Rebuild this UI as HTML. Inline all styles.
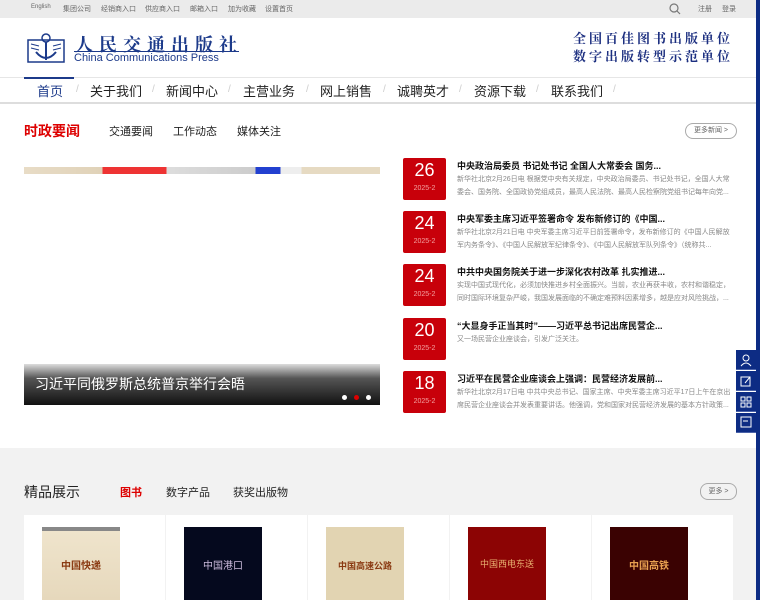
<!DOCTYPE html>
<html><head><meta charset="utf-8">
<style>
*{margin:0;padding:0;box-sizing:border-box}
html,body{width:760px;height:600px;overflow:hidden}
body{background:#fff;font-family:"Liberation Sans","Noto Sans CJK SC",sans-serif;position:relative;color:#222}
.top{position:absolute;left:0;top:0;width:756px;height:18px;background:#ebebeb;font-size:7px;color:#666}
.top span{position:absolute;top:4px}
.right{position:absolute;right:0;top:0;width:4px;height:600px;background:#0d2c84}
.nav{position:absolute;top:77px;left:0;width:756px;height:27px;border-top:1px solid #e6e6e6;border-bottom:2px solid #ddd}
.nav span{position:absolute;top:3px;font-size:13px;color:#222}
.nav i{position:absolute;top:6px;font-style:normal;color:#ccc;font-size:10px}
.date{position:absolute;left:403px;width:43px;height:42px;background:#c8000a;border-radius:2px;color:#fff;text-align:center}
.date b{display:block;font-size:18px;font-weight:normal;line-height:18px;margin-top:3px}
.date s{display:block;text-decoration:none;font-size:7px;color:#f3a0a0;margin-top:6px}
.nt{position:absolute;left:457px;font-size:9px;font-weight:bold;color:#111}
.nd{position:absolute;left:457px;width:278px;font-size:7px;color:#888;line-height:13px}
.card{position:absolute;top:515px;width:141px;height:85px;background:#fff}
.book{position:absolute;top:527px;width:78px;height:73px}
.side{position:absolute;left:736px;width:20px;height:20px;background:#0d2c84;border-bottom:1px solid #4a62a8}
</style></head><body>
<div class="top">
<span style="left:31px;font-size:6px">English</span><span style="left:63px">集团公司</span><span style="left:101px">经销商入口</span><span style="left:145px">供应商入口</span><span style="left:190px">邮箱入口</span><span style="left:228px">加为收藏</span><span style="left:265px">设置首页</span>
<svg style="position:absolute;left:669px;top:3px" width="12" height="12"><circle cx="5" cy="5" r="4" fill="none" stroke="#777" stroke-width="1.2"/><line x1="8" y1="8" x2="11" y2="11" stroke="#777" stroke-width="1.2"/></svg>
<span style="left:698px">注册</span><span style="left:722px">登录</span>
</div>
<div class="right"></div>
<svg style="position:absolute;left:27px;top:32px" width="38" height="32"><rect x="1" y="8" width="36" height="22" fill="none" stroke="#1c3a8a" stroke-width="1.5"/><circle cx="19" cy="6" r="4" fill="none" stroke="#1c3a8a" stroke-width="1.5"/><line x1="19" y1="10" x2="19" y2="28" stroke="#1c3a8a" stroke-width="2"/><path d="M9 20 Q19 32 29 20" fill="none" stroke="#1c3a8a" stroke-width="2"/><path d="M4 12 L12 14 M4 16 L12 18 M34 12 L26 14 M34 16 L26 18" stroke="#1c3a8a"/></svg>
<div style="position:absolute;left:75px;top:31px;font-size:18px;font-weight:bold;color:#1c3a8a;letter-spacing:6px;font-family:'Noto Serif CJK SC',serif">人民交通出版社</div>
<div style="position:absolute;left:74px;top:51px;width:165px;border-top:1px solid #1c3a8a"></div>
<div style="position:absolute;left:74px;top:52px;font-size:11px;color:#1c3a8a">China Communications Press</div>
<div style="position:absolute;left:573px;top:29px;font-size:13px;font-weight:bold;color:#1c2f80;letter-spacing:3px;line-height:18px;font-family:'Noto Serif CJK SC',serif">全国百佳图书出版单位<br>数字出版转型示范单位</div>
<div class="nav">
<div style="position:absolute;left:24px;top:-1px;width:50px;height:2px;background:#1c3a8a"></div>
<span style="left:37px;color:#1c3a8a">首页</span><i style="left:76px">/</i>
<span style="left:90px">关于我们</span><i style="left:152px">/</i>
<span style="left:166px">新闻中心</span><i style="left:228px">/</i>
<span style="left:243px">主营业务</span><i style="left:306px">/</i>
<span style="left:320px">网上销售</span><i style="left:383px">/</i>
<span style="left:397px">诚聘英才</span><i style="left:459px">/</i>
<span style="left:474px">资源下载</span><i style="left:536px">/</i>
<span style="left:551px">联系我们</span><i style="left:613px">/</i>
</div>
<div style="position:absolute;left:24px;top:121px;font-size:14px;font-weight:bold;color:#d00">时政要闻</div>
<div style="position:absolute;left:109px;top:123px;font-size:11px">交通要闻</div>
<div style="position:absolute;left:173px;top:123px;font-size:11px">工作动态</div>
<div style="position:absolute;left:237px;top:123px;font-size:11px">媒体关注</div>
<div style="position:absolute;left:685px;top:123px;width:52px;height:16px;border:1px solid #aaa;border-radius:8px;font-size:7px;color:#666;text-align:center;line-height:14px">更多新闻 &gt;</div>
<div style="position:absolute;left:24px;top:167px;width:356px;height:7px;background:linear-gradient(90deg,#e8dcc6 0,#e0d2b8 22%,#e33 22%,#e33 40%,#ddd 40%,#ccc 65%,#2240d0 65%,#2240d0 72%,#eee 72%,#eee 78%,#e6dac2 78%)"></div>
<div style="position:absolute;left:24px;top:364px;width:356px;height:41px;background:linear-gradient(#ddd,#555 35%,#111)"></div>
<div style="position:absolute;left:35px;top:374px;font-size:14px;color:#fff">习近平同俄罗斯总统普京举行会晤</div>
<div style="position:absolute;left:342px;top:395px;width:5px;height:5px;border-radius:50%;background:#fff"></div>
<div style="position:absolute;left:354px;top:395px;width:5px;height:5px;border-radius:50%;background:#d00"></div>
<div style="position:absolute;left:366px;top:395px;width:5px;height:5px;border-radius:50%;background:#fff"></div>
<div class="date" style="top:158px"><b>26</b><s>2025-2</s></div>
<div class="nt" style="top:159px">中央政治局委员 书记处书记 全国人大常委会 国务...</div>
<div class="nd" style="top:173px">新华社北京2月26日电 根据党中央有关规定，中央政治局委员、书记处书记，全国人大常委会、国务院、全国政协党组成员，最高人民法院、最高人民检察院党组书记每年向党...</div>
<div class="date" style="top:211px"><b>24</b><s>2025-2</s></div>
<div class="nt" style="top:212px">中央军委主席习近平签署命令 发布新修订的《中国...</div>
<div class="nd" style="top:226px">新华社北京2月21日电 中央军委主席习近平日前签署命令，发布新修订的《中国人民解放军内务条令》、《中国人民解放军纪律条令》、《中国人民解放军队列条令》（统称共...</div>
<div class="date" style="top:264px"><b>24</b><s>2025-2</s></div>
<div class="nt" style="top:265px">中共中央国务院关于进一步深化农村改革 扎实推进...</div>
<div class="nd" style="top:279px">实现中国式现代化，必须加快推进乡村全面振兴。当前，农业再获丰收，农村和谐稳定，同时国际环境复杂严峻，我国发展面临的不确定难预料因素增多，越是应对风险挑战，...</div>
<div class="date" style="top:318px"><b>20</b><s>2025-2</s></div>
<div class="nt" style="top:319px">“大显身手正当其时”——习近平总书记出席民营企...</div>
<div class="nd" style="top:333px">又一场民营企业座谈会，引发广泛关注。</div>
<div class="date" style="top:371px"><b>18</b><s>2025-2</s></div>
<div class="nt" style="top:372px">习近平在民营企业座谈会上强调：民营经济发展前...</div>
<div class="nd" style="top:386px">新华社北京2月17日电 中共中央总书记、国家主席、中央军委主席习近平17日上午在京出席民营企业座谈会并发表重要讲话。他强调，党和国家对民营经济发展的基本方针政策...</div>
<div class="side" style="top:350px"></div><div class="side" style="top:371px"></div><div class="side" style="top:392px"></div><div class="side" style="top:413px;height:20px"></div>
<svg style="position:absolute;left:739px;top:353px" width="14" height="78" fill="none" stroke="#fff" stroke-width="1"><circle cx="7" cy="5" r="3"/><path d="M2 13 Q7 7 12 13"/><rect x="2" y="24" width="9" height="9"/><path d="M6 30 L11 24"/><rect x="2" y="44" width="4" height="4"/><rect x="8" y="44" width="4" height="4"/><rect x="2" y="50" width="4" height="4"/><rect x="8" y="50" width="4" height="4"/><rect x="2" y="64" width="10" height="10"/><path d="M4 68h5"/></svg>
<div style="position:absolute;left:0;top:448px;width:756px;height:152px;background:#f2f2f2"></div>
<div style="position:absolute;left:24px;top:482px;font-size:14px;color:#222">精品展示</div>
<div style="position:absolute;left:120px;top:484px;font-size:11px;font-weight:bold;color:#d00">图书</div>
<div style="position:absolute;left:166px;top:484px;font-size:11px">数字产品</div>
<div style="position:absolute;left:233px;top:484px;font-size:11px">获奖出版物</div>
<div style="position:absolute;left:700px;top:483px;width:37px;height:17px;border:1px solid #aaa;border-radius:8px;font-size:7px;color:#666;text-align:center;line-height:15px">更多 &gt;</div>
<div class="card" style="left:24px"></div><div class="card" style="left:166px"></div><div class="card" style="left:308px"></div><div class="card" style="left:450px"></div><div class="card" style="left:592px"></div>
<div class="book" style="left:42px;background:linear-gradient(#888 0,#888 4px,#efe4cc 4px,#e6d8bc)"><div style="margin-top:30px;text-align:center;color:#8a3a12;font-size:10px;font-weight:bold">中国快递</div></div>
<div class="book" style="left:184px;background:#05091e"><div style="margin-top:30px;text-align:center;color:#cbd;font-size:10px">中国港口</div></div>
<div class="book" style="left:326px;background:#e2d4b2"><div style="margin-top:32px;text-align:center;color:#8a3a12;font-size:9px;font-weight:bold">中国高速公路</div></div>
<div class="book" style="left:468px;background:#8c0404"><div style="margin-top:30px;text-align:center;color:#e8b070;font-size:9px">中国西电东送</div></div>
<div class="book" style="left:610px;background:#3a0202"><div style="margin-top:30px;text-align:center;color:#e8a050;font-size:10px;font-weight:bold">中国高铁</div></div>
</body></html>
